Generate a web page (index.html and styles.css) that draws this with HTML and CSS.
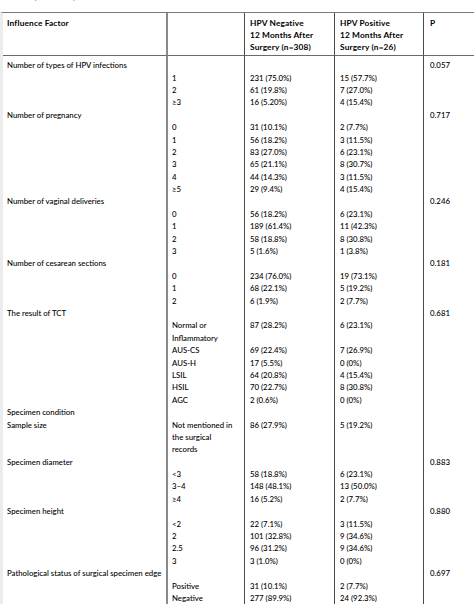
FILE: index.html
```html
<!DOCTYPE html>
<html lang="en">
<head>
<meta charset="utf-8">
<title>Influence factors table</title>
<link rel="stylesheet" href="styles.css">
</head>
<body>
<div class="caption">Table 2 (Continued).</div>
<table class="data">
  <colgroup>
    <col class="c-factor">
    <col class="c-sub">
    <col class="c-neg">
    <col class="c-pos">
    <col class="c-p">
  </colgroup>
  <thead>
    <tr>
      <th>Influence Factor</th>
      <th></th>
      <th>HPV Negative<br>12 Months After<br>Surgery (n=308)</th>
      <th>HPV Positive<br>12 Months After<br>Surgery (n=26)</th>
      <th>P</th>
    </tr>
  </thead>
  <tbody>
    <tr class="first">
      <td><div>Number of types of HPV infections</div></td>
      <td><div>&nbsp;</div><div>1</div><div>2</div><div>≥3</div></td>
      <td><div>&nbsp;</div><div>231 (75.0%)</div><div>61 (19.8%)</div><div>16 (5.20%)</div></td>
      <td><div>&nbsp;</div><div>15 (57.7%)</div><div>7 (27.0%)</div><div>4 (15.4%)</div></td>
      <td><div>0.057</div></td>
    </tr>
    <tr>
      <td><div>Number of pregnancy</div></td>
      <td><div>&nbsp;</div><div>0</div><div>1</div><div>2</div><div>3</div><div>4</div><div>≥5</div></td>
      <td><div>&nbsp;</div><div>31 (10.1%)</div><div>56 (18.2%)</div><div>83 (27.0%)</div><div>65 (21.1%)</div><div>44 (14.3%)</div><div>29 (9.4%)</div></td>
      <td><div>&nbsp;</div><div>2 (7.7%)</div><div>3 (11.5%)</div><div>6 (23.1%)</div><div>8 (30.7%)</div><div>3 (11.5%)</div><div>4 (15.4%)</div></td>
      <td><div>0.717</div></td>
    </tr>
    <tr>
      <td><div>Number of vaginal deliveries</div></td>
      <td><div>&nbsp;</div><div>0</div><div>1</div><div>2</div><div>3</div></td>
      <td><div>&nbsp;</div><div>56 (18.2%)</div><div>189 (61.4%)</div><div>58 (18.8%)</div><div>5 (1.6%)</div></td>
      <td><div>&nbsp;</div><div>6 (23.1%)</div><div>11 (42.3%)</div><div>8 (30.8%)</div><div>1 (3.8%)</div></td>
      <td><div>0.246</div></td>
    </tr>
    <tr>
      <td><div>Number of cesarean sections</div></td>
      <td><div>&nbsp;</div><div>0</div><div>1</div><div>2</div></td>
      <td><div>&nbsp;</div><div>234 (76.0%)</div><div>68 (22.1%)</div><div>6 (1.9%)</div></td>
      <td><div>&nbsp;</div><div>19 (73.1%)</div><div>5 (19.2%)</div><div>2 (7.7%)</div></td>
      <td><div>0.181</div></td>
    </tr>
    <tr>
      <td><div>The result of TCT</div></td>
      <td><div>&nbsp;</div><div>Normal or</div><div>Inflammatory</div><div>AUS-CS</div><div>AUS-H</div><div>LSIL</div><div>HSIL</div><div>AGC</div></td>
      <td><div>&nbsp;</div><div>87 (28.2%)</div><div>&nbsp;</div><div>69 (22.4%)</div><div>17 (5.5%)</div><div>64 (20.8%)</div><div>70 (22.7%)</div><div>2 (0.6%)</div></td>
      <td><div>&nbsp;</div><div>6 (23.1%)</div><div>&nbsp;</div><div>7 (26.9%)</div><div>0 (0%)</div><div>4 (15.4%)</div><div>8 (30.8%)</div><div>0 (0%)</div></td>
      <td><div>0.681</div></td>
    </tr>
    <tr>
      <td><div>Specimen condition</div><div>Sample size</div></td>
      <td><div>&nbsp;</div><div>Not mentioned in</div><div>the surgical</div><div>records</div></td>
      <td><div>&nbsp;</div><div>86 (27.9%)</div></td>
      <td><div>&nbsp;</div><div>5 (19.2%)</div></td>
      <td></td>
    </tr>
    <tr>
      <td><div>Specimen diameter</div></td>
      <td><div>&nbsp;</div><div>&lt;3</div><div>3–4</div><div>≥4</div></td>
      <td><div>&nbsp;</div><div>58 (18.8%)</div><div>148 (48.1%)</div><div>16 (5.2%)</div></td>
      <td><div>&nbsp;</div><div>6 (23.1%)</div><div>13 (50.0%)</div><div>2 (7.7%)</div></td>
      <td><div>0.883</div></td>
    </tr>
    <tr>
      <td><div>Specimen height</div></td>
      <td><div>&nbsp;</div><div>&lt;2</div><div>2</div><div>2.5</div><div>3</div></td>
      <td><div>&nbsp;</div><div>22 (7.1%)</div><div>101 (32.8%)</div><div>96 (31.2%)</div><div>3 (1.0%)</div></td>
      <td><div>&nbsp;</div><div>3 (11.5%)</div><div>9 (34.6%)</div><div>9 (34.6%)</div><div>0 (0%)</div></td>
      <td><div>0.880</div></td>
    </tr>
    <tr>
      <td><div>Pathological status of surgical specimen edge</div></td>
      <td><div>&nbsp;</div><div>Positive</div><div>Negative</div></td>
      <td><div>&nbsp;</div><div>31 (10.1%)</div><div>277 (89.9%)</div></td>
      <td><div>&nbsp;</div><div>2 (7.7%)</div><div>24 (92.3%)</div></td>
      <td><div>0.697</div></td>
    </tr>
  </tbody>
</table>
</body>
</html>
```

FILE: styles.css
```css
html, body {
  margin: 0;
  padding: 0;
  background: #ffffff;
}

body {
  width: 474px;
  height: 608px;
  overflow: hidden;
  font-family: "Lato", "Open Sans", "Liberation Sans", sans-serif;
  font-size: 7.8px;
  font-weight: 500;
  color: #000;
}

.caption {
  height: 11px;
  margin-top: -8px;
  margin-bottom: 8.5px;
  padding-left: 7px;
  line-height: 11px;
  font-size: 8px;
  color: #777;
  white-space: nowrap;
}

.data {
  width: 474px;
  table-layout: fixed;
  border-collapse: separate;
  border-spacing: 0;
  border-top: 1px solid #7a7a7a;
  border-left: 3px solid #ececec;
}

.c-factor { width: 163px; }
.c-sub { width: 78px; }
.c-neg { width: 90px; }
.c-pos { width: 89px; }
.c-p { width: 54px; }

.data th,
.data td {
  vertical-align: top;
  text-align: left;
  white-space: nowrap;
  padding: 0 0 0 4px;
}

.data th + th,
.data td + td {
  border-left: 1px solid #4a4a4a;
}

.data th:nth-child(2),
.data td:nth-child(2) {
  border-left: 2px solid #8a8a8a;
}

.data th:nth-child(3),
.data td:nth-child(3),
.data th:nth-child(4),
.data td:nth-child(4) {
  padding-left: 5px;
}

.data th:nth-child(5),
.data td:nth-child(5) {
  padding-left: 6px;
}

.data th {
  font-weight: 700;
  font-size: 8.3px;
  letter-spacing: 0.15px;
  line-height: 12.3px;
  padding-top: 4px;
  padding-bottom: 2px;
  border-bottom: 1px solid #6a6a6a;
}

.data td div {
  line-height: 12.4px;
  height: 12.4px;
}

.data tr.first td {
  padding-top: 2.8px;
}
```
